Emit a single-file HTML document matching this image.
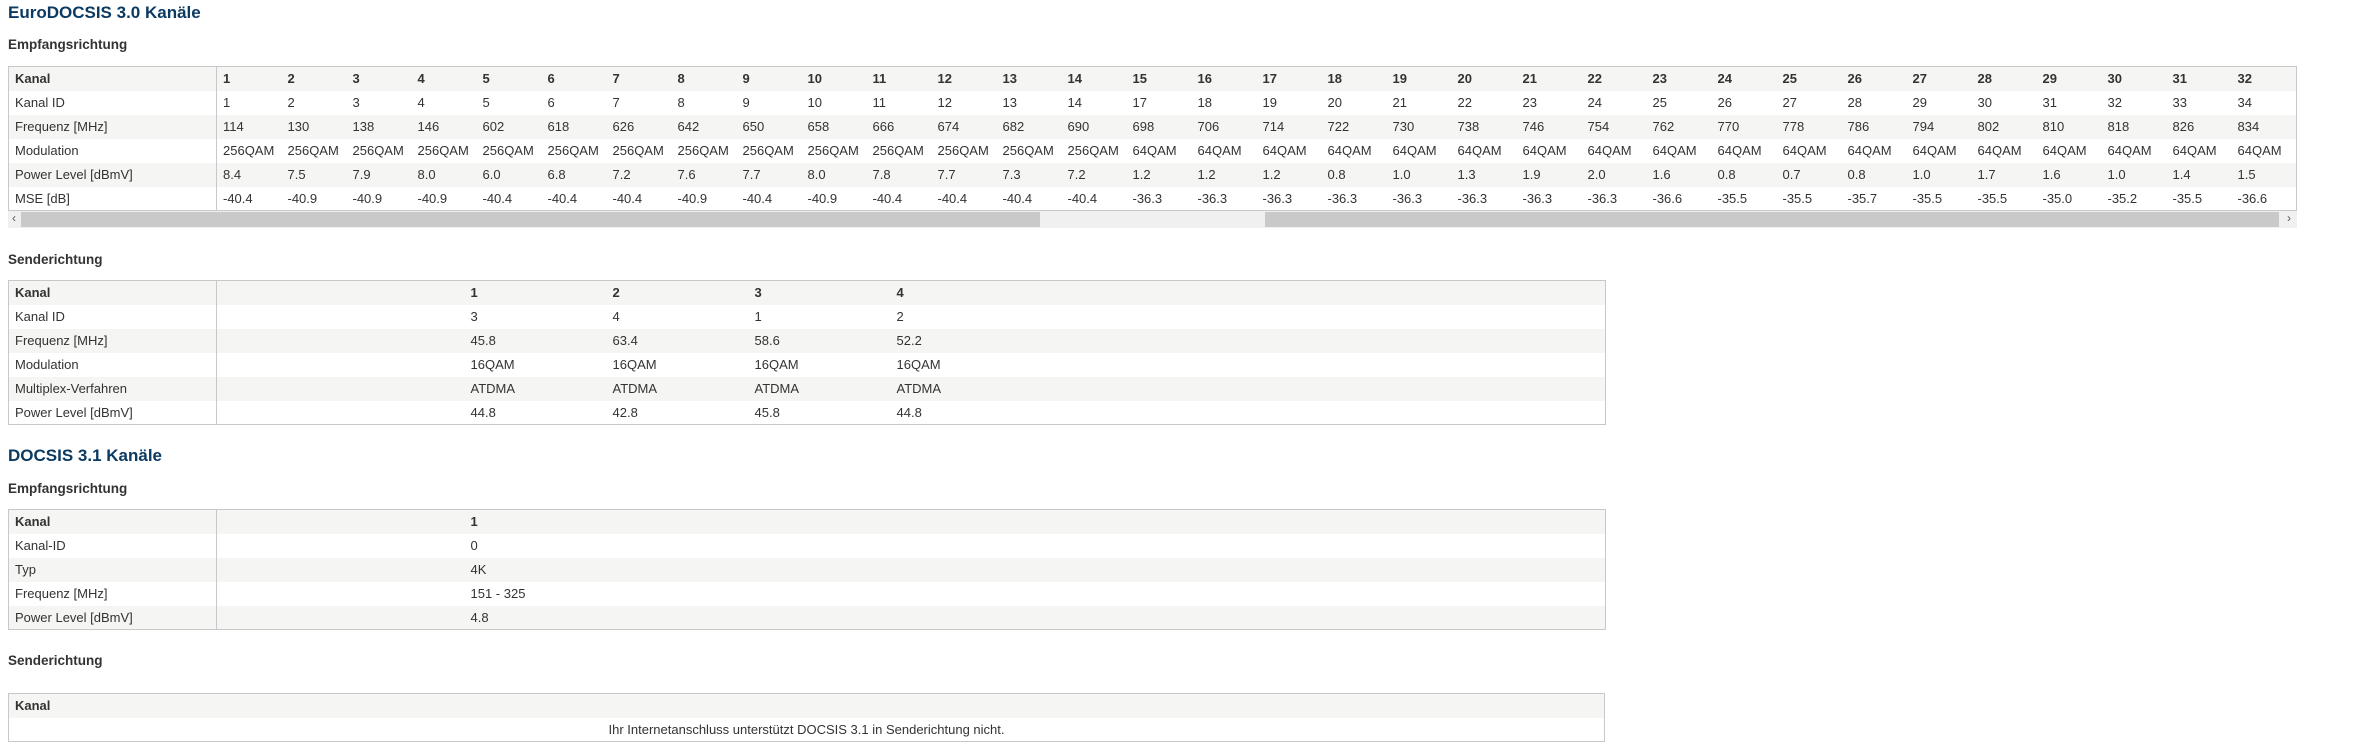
<!DOCTYPE html>
<html><head><meta charset="utf-8"><style>
body{margin:0;width:2368px;height:752px;background:#fff;font-family:"Liberation Sans",sans-serif;font-size:13px;color:#333;position:relative;overflow:hidden}
h1{position:absolute;left:8px;top:3px;margin:0;font-size:17px;font-weight:bold;color:#0b3a62}
h2{position:absolute;left:8px;margin:0;font-size:13.5px;font-weight:bold;color:#333}
table{position:absolute;left:8px;border-collapse:collapse;border:1px solid #c8c8c8;table-layout:fixed}
tr{height:24px}
td{padding:0;text-indent:6px;white-space:nowrap;overflow:hidden;vertical-align:middle}
tr:nth-child(odd) td{background:#f5f5f3}
tr:first-child td{font-weight:bold}
td.f{border-right:1px solid #c8c8c8}
.sb{position:absolute;left:8px;top:211px;width:2289px;height:17px;background:#f0f0f0}
.sb div{position:absolute;top:1px;height:15px;background:#c9c9c9}
.sb span{position:absolute;top:0;font-size:12px;color:#555}
</style></head><body>
<h1>EuroDOCSIS 3.0 Kanäle</h1>
<h2 style="top:37px">Empfangsrichtung</h2>
<table style="top:66px;width:2289px">
<colgroup><col style="width:208px"><col span="32" style="width:65px"></colgroup>
<tr><td class="f">Kanal</td><td>1</td><td>2</td><td>3</td><td>4</td><td>5</td><td>6</td><td>7</td><td>8</td><td>9</td><td>10</td><td>11</td><td>12</td><td>13</td><td>14</td><td>15</td><td>16</td><td>17</td><td>18</td><td>19</td><td>20</td><td>21</td><td>22</td><td>23</td><td>24</td><td>25</td><td>26</td><td>27</td><td>28</td><td>29</td><td>30</td><td>31</td><td>32</td></tr>
<tr><td class="f">Kanal ID</td><td>1</td><td>2</td><td>3</td><td>4</td><td>5</td><td>6</td><td>7</td><td>8</td><td>9</td><td>10</td><td>11</td><td>12</td><td>13</td><td>14</td><td>17</td><td>18</td><td>19</td><td>20</td><td>21</td><td>22</td><td>23</td><td>24</td><td>25</td><td>26</td><td>27</td><td>28</td><td>29</td><td>30</td><td>31</td><td>32</td><td>33</td><td>34</td></tr>
<tr><td class="f">Frequenz [MHz]</td><td>114</td><td>130</td><td>138</td><td>146</td><td>602</td><td>618</td><td>626</td><td>642</td><td>650</td><td>658</td><td>666</td><td>674</td><td>682</td><td>690</td><td>698</td><td>706</td><td>714</td><td>722</td><td>730</td><td>738</td><td>746</td><td>754</td><td>762</td><td>770</td><td>778</td><td>786</td><td>794</td><td>802</td><td>810</td><td>818</td><td>826</td><td>834</td></tr>
<tr><td class="f">Modulation</td><td>256QAM</td><td>256QAM</td><td>256QAM</td><td>256QAM</td><td>256QAM</td><td>256QAM</td><td>256QAM</td><td>256QAM</td><td>256QAM</td><td>256QAM</td><td>256QAM</td><td>256QAM</td><td>256QAM</td><td>256QAM</td><td>64QAM</td><td>64QAM</td><td>64QAM</td><td>64QAM</td><td>64QAM</td><td>64QAM</td><td>64QAM</td><td>64QAM</td><td>64QAM</td><td>64QAM</td><td>64QAM</td><td>64QAM</td><td>64QAM</td><td>64QAM</td><td>64QAM</td><td>64QAM</td><td>64QAM</td><td>64QAM</td></tr>
<tr><td class="f">Power Level [dBmV]</td><td>8.4</td><td>7.5</td><td>7.9</td><td>8.0</td><td>6.0</td><td>6.8</td><td>7.2</td><td>7.6</td><td>7.7</td><td>8.0</td><td>7.8</td><td>7.7</td><td>7.3</td><td>7.2</td><td>1.2</td><td>1.2</td><td>1.2</td><td>0.8</td><td>1.0</td><td>1.3</td><td>1.9</td><td>2.0</td><td>1.6</td><td>0.8</td><td>0.7</td><td>0.8</td><td>1.0</td><td>1.7</td><td>1.6</td><td>1.0</td><td>1.4</td><td>1.5</td></tr>
<tr><td class="f">MSE [dB]</td><td>-40.4</td><td>-40.9</td><td>-40.9</td><td>-40.9</td><td>-40.4</td><td>-40.4</td><td>-40.4</td><td>-40.9</td><td>-40.4</td><td>-40.9</td><td>-40.4</td><td>-40.4</td><td>-40.4</td><td>-40.4</td><td>-36.3</td><td>-36.3</td><td>-36.3</td><td>-36.3</td><td>-36.3</td><td>-36.3</td><td>-36.3</td><td>-36.3</td><td>-36.6</td><td>-35.5</td><td>-35.5</td><td>-35.7</td><td>-35.5</td><td>-35.5</td><td>-35.0</td><td>-35.2</td><td>-35.5</td><td>-36.6</td></tr>
</table>
<div class="sb"><span style="left:4px">&#8249;</span><div style="left:13px;width:1019px"></div><div style="left:1257px;width:1014px"></div><span style="left:2279px">&#8250;</span></div>

<h2 style="top:252px">Senderichtung</h2>
<table style="top:280px;width:1597px">
<colgroup><col style="width:208px"><col style="width:248px"><col span="3" style="width:142px"><col style="width:715px"></colgroup>
<tr><td class="f">Kanal</td><td></td><td>1</td><td>2</td><td>3</td><td>4</td></tr>
<tr><td class="f">Kanal ID</td><td></td><td>3</td><td>4</td><td>1</td><td>2</td></tr>
<tr><td class="f">Frequenz [MHz]</td><td></td><td>45.8</td><td>63.4</td><td>58.6</td><td>52.2</td></tr>
<tr><td class="f">Modulation</td><td></td><td>16QAM</td><td>16QAM</td><td>16QAM</td><td>16QAM</td></tr>
<tr><td class="f">Multiplex-Verfahren</td><td></td><td>ATDMA</td><td>ATDMA</td><td>ATDMA</td><td>ATDMA</td></tr>
<tr><td class="f">Power Level [dBmV]</td><td></td><td>44.8</td><td>42.8</td><td>45.8</td><td>44.8</td></tr>
</table>

<h1 style="top:446px">DOCSIS 3.1 Kanäle</h1>
<h2 style="top:481px">Empfangsrichtung</h2>
<table style="top:509px;width:1597px">
<colgroup><col style="width:208px"><col style="width:248px"><col style="width:1141px"></colgroup>
<tr><td class="f">Kanal</td><td></td><td>1</td></tr>
<tr><td class="f">Kanal-ID</td><td></td><td>0</td></tr>
<tr><td class="f">Typ</td><td></td><td>4K</td></tr>
<tr><td class="f">Frequenz [MHz]</td><td></td><td>151 - 325</td></tr>
<tr><td class="f">Power Level [dBmV]</td><td></td><td>4.8</td></tr>
</table>

<h2 style="top:653px">Senderichtung</h2>
<table style="top:693px;width:1597px">
<tr><td>Kanal</td></tr>
<tr><td style="text-align:center;text-indent:0;background:#fff">Ihr Internetanschluss unterstützt DOCSIS 3.1 in Senderichtung nicht.</td></tr>
</table>
</body></html>
